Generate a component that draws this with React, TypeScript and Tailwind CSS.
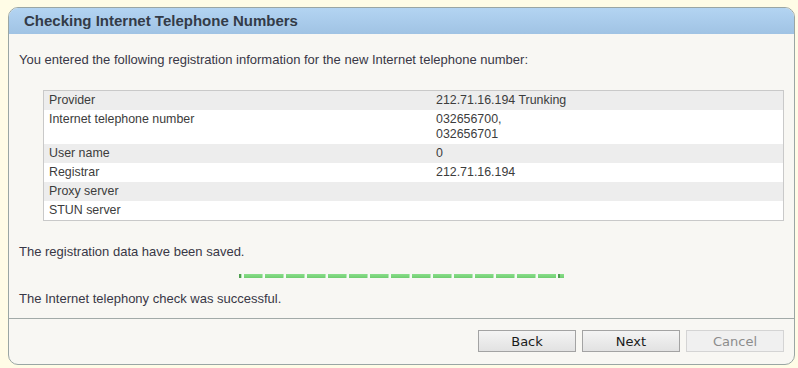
import React from "react";

const rows: { label: string; value: string[] }[] = [
  { label: "Provider", value: ["212.71.16.194 Trunking"] },
  { label: "Internet telephone number", value: ["032656700,", "032656701"] },
  { label: "User name", value: ["0"] },
  { label: "Registrar", value: ["212.71.16.194"] },
  { label: "Proxy server", value: [] },
  { label: "STUN server", value: [] },
];

function ProgressBar() {
  const segs = Array.from({ length: 15 });
  return (
    <div className="mx-auto flex h-[4px] w-[325px] bg-gradient-to-b from-[#8ade8a] to-[#6fcd6f]">
      <span className="h-full w-[2px] bg-[#4f9f4f]" />
      {segs.map((_, i) => (
        <span key={i} className="flex h-full w-[21px]">
          <span className="h-full w-[1px] bg-[#b5e6b5]" />
          <span className="h-full w-[2px] bg-[#f4fbf4]" />
          <span className="h-full flex-1" />
        </span>
      ))}
      <span className="h-full w-[2px] bg-[#f4fbf4]" />
      <span className="h-full w-[2px] bg-[#4f9f4f]" />
    </div>
  );
}

function Btn({ label, disabled }: { label: string; disabled?: boolean }) {
  return (
    <button
      disabled={disabled}
      className={`h-[22px] w-[98px] border text-[13px] leading-none ${
        disabled
          ? "border-[#d4d4d4] bg-[#f0f0f0] text-[#8c8c8c]"
          : "border-[#a3a3a3] bg-gradient-to-b from-[#f4f4f4] to-[#e2e2e2] text-[#1a1a1a]"
      }`}
      style={{ fontFamily: "Tahoma, 'DejaVu Sans', sans-serif" }}
    >
      {label}
    </button>
  );
}

export default function App() {
  return (
    <div className="h-[368px] w-[798px] overflow-hidden bg-[#fffce6] pt-[7px] pl-[8px]" style={{ fontFamily: "'Liberation Sans', Arial, sans-serif" }}>
      <div className="flex h-[358px] w-[787px] flex-col overflow-hidden rounded-[10px] border border-[#9aa6a4] bg-[#f8f7f3]">
        <div className="flex h-[26px] shrink-0 items-center bg-gradient-to-b from-[#b3d4f2] to-[#a0c3e4] pl-[15px] text-[15px] font-bold text-[#333b48]">
          Checking Internet Telephone Numbers
        </div>

        <div className="flex-1 px-[10px] text-[13px] leading-[15px] text-[#383846]">
          <p className="mt-[18px]">You entered the following registration information for the new Internet telephone number:</p>

          <div className="mt-[23px] ml-[24px] border border-[#c9c9c9] text-[12.4px] text-[#3c3c3c]">
            {rows.map((r, i) => (
              <div key={r.label} className={`grid grid-cols-[387px_1fr] py-[2px] ${i % 2 === 0 ? "bg-[#ededed]" : "bg-white"}`}>
                <div className="px-[5px]">{r.label}</div>
                <div className="min-h-[15px] px-[5px]">
                  {r.value.map((v) => (
                    <div key={v}>{v}</div>
                  ))}
                </div>
              </div>
            ))}
          </div>

          <p className="mt-[23px]">The registration data have been saved.</p>
          <div className="mt-[15px]">
            <ProgressBar />
          </div>
          <p className="mt-[13px]">The Internet telephony check was successful.</p>
        </div>

        <div className="flex h-[46px] shrink-0 justify-end gap-[6px] border-t border-[#a2aaa8] pt-[11px] pr-[10px]">
          <Btn label="Back" />
          <Btn label="Next" />
          <Btn label="Cancel" disabled />
        </div>
      </div>
    </div>
  );
}
